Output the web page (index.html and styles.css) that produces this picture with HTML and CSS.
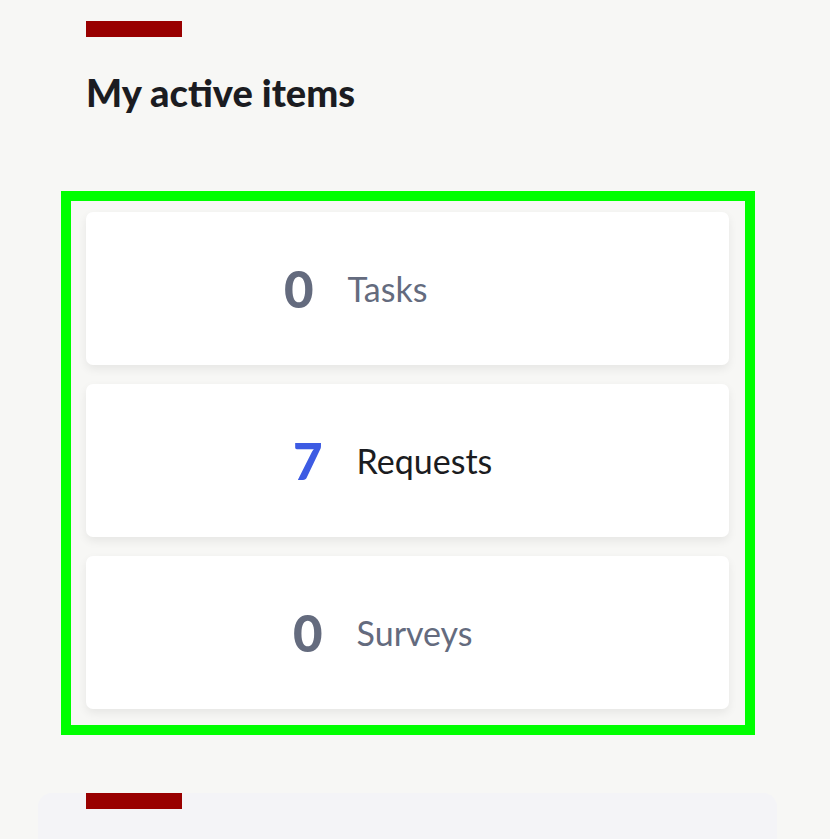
FILE: index.html
```html
<!DOCTYPE html>
<html lang="en">
<head>
<meta charset="utf-8">
<title>My active items</title>
<link rel="stylesheet" href="styles.css">
</head>
<body>
<main class="page">
  <section class="section">
    <div class="accent"></div>
    <h2 class="title">My active items</h2>
    <div class="highlight">
      <ul class="cards">
        <li class="card card--tasks">
          <span class="count">0</span>
          <span class="label">Tasks</span>
        </li>
        <li class="card card--active">
          <span class="count">7</span>
          <span class="label">Requests</span>
        </li>
        <li class="card">
          <span class="count">0</span>
          <span class="label">Surveys</span>
        </li>
      </ul>
    </div>
  </section>
  <section class="panel">
    <div class="accent accent--panel"></div>
  </section>
</main>
</body>
</html>
```

FILE: styles.css
```css
html, body {
  margin: 0;
  padding: 0;
}
body {
  background: #f7f7f5;
  font-family: Lato, "Open Sans", "Liberation Sans", sans-serif;
  color: #1b1c21;
  overflow: hidden;
}
.page {
  padding: 21px 75px 0 61px;
}
.section {
  display: flex;
  flex-direction: column;
}
.accent {
  width: 96px;
  height: 16px;
  background: #990000;
  margin-left: 25px;
}
.title {
  margin: 32px 0 0 25px;
  font-size: 38px;
  line-height: 46px;
  font-weight: 900;
  color: #1b1c21;
  letter-spacing: 0;
}
.highlight {
  margin-top: 76px;
  border: 10px solid #00ff00;
  padding: 11px 16px 16px 15px;
}
.cards {
  list-style: none;
  margin: 0;
  padding: 0;
  display: flex;
  flex-direction: column;
  gap: 19px;
}
.card {
  height: 153px;
  background: #ffffff;
  border-radius: 7px;
  box-shadow: 0 4px 10px rgba(0, 0, 0, 0.07);
  display: flex;
  align-items: center;
  gap: 34px;
  padding-left: 207px;
  box-sizing: border-box;
}
.card--tasks {
  padding-left: 198px;
}
.count {
  font-size: 51px;
  font-weight: 900;
  color: #646b7e;
  line-height: 1;
}
.label {
  font-size: 34px;
  font-weight: 400;
  color: #646b7e;
  line-height: 1;
}
.card--active .count {
  color: #3d5be3;
}
.card--active .label {
  color: #1b1c21;
}
.panel {
  margin: 58px 0 0 -23px;
  width: 739px;
  height: 46px;
  background: #f4f4f7;
  border-radius: 14px 14px 0 0;
}
.accent--panel {
  margin-left: 48px;
}
```
